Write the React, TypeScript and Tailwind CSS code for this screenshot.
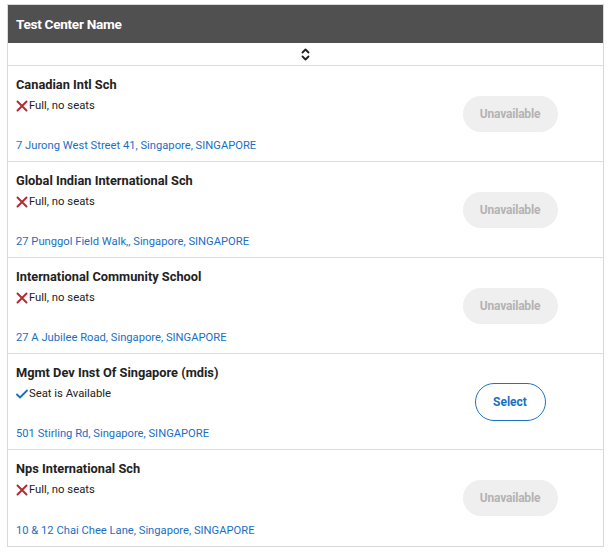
import React from 'react';

type Center = { name: string; available: boolean; address: string };

const centers: Center[] = [
  { name: 'Canadian Intl Sch', available: false, address: '7 Jurong West Street 41, Singapore, SINGAPORE' },
  { name: 'Global Indian International Sch', available: false, address: '27 Punggol Field Walk,, Singapore, SINGAPORE' },
  { name: 'International Community School', available: false, address: '27 A Jubilee Road, Singapore, SINGAPORE' },
  { name: 'Mgmt Dev Inst Of Singapore (mdis)', available: true, address: '501 Stirling Rd, Singapore, SINGAPORE' },
  { name: 'Nps International Sch', available: false, address: '10 & 12 Chai Chee Lane, Singapore, SINGAPORE' },
];

const SortIcon = () => (
  <svg width="9" height="13" viewBox="0 0 9 13" fill="none" stroke="#222" strokeWidth="1.8" strokeLinecap="round" strokeLinejoin="round">
    <path d="M1.5 4.5 4.5 1.5 7.5 4.5" />
    <path d="M1.5 8.5 4.5 11.5 7.5 8.5" />
  </svg>
);

const Cross = () => (
  <svg width="12" height="12" viewBox="0 0 12 12" stroke="#b8262f" strokeWidth="1.9" strokeLinecap="round">
    <path d="M1.5 1.5 10.5 10.5M10.5 1.5 1.5 10.5" />
  </svg>
);

const Check = () => (
  <svg width="12" height="10" viewBox="0 0 12 10" fill="none" stroke="#1b6fb8" strokeWidth="1.8" strokeLinecap="round" strokeLinejoin="round">
    <path d="M1 5.5 4 8.5 11 1.5" />
  </svg>
);

const App: React.FC = () => {
  return (
    <div className="min-h-[555px] bg-white px-[7px] pt-1 font-['Roboto',sans-serif]">
      <div className="w-[597px] border border-[#d9d9d9]">
        <div className="h-[38px] bg-[#505050] px-[8px] flex items-center">
          <span className="text-[13.6px] font-bold text-white tracking-[-0.3px]">Test Center Name</span>
        </div>
        <div className="h-[23px] flex items-center justify-center border-b border-[#dcdcdc]">
          <SortIcon />
        </div>
        {centers.map((center, i) => (
          <div key={center.name} className={`h-[96px] flex ${i < centers.length - 1 ? 'border-b border-[#dcdcdc]' : ''}`}>
            <div className="flex-1 flex flex-col justify-between pl-[8px] pt-[10px] pb-[7px]">
              <div>
                <div className="text-[12.8px] leading-[18px] font-bold text-[#222]">{center.name}</div>
                <div className="mt-[3px] flex items-center text-[11.3px] leading-[18px] text-[#222]">
                  {center.available ? <Check /> : <Cross />}
                  <span className="ml-[1px]">{center.available ? 'Seat is Available' : 'Full, no seats'}</span>
                </div>
              </div>
              <div className="text-[11.2px] leading-[16px] text-[#1a6fc4]">{center.address}</div>
            </div>
            <div className="w-[186px] flex items-center justify-center">
              {center.available ? (
                <button className="h-[38px] w-[71px] rounded-full border border-[#1a73c8] text-[12px] font-bold text-[#1a6fc4]">Select</button>
              ) : (
                <button className="h-[36px] w-[95px] rounded-full bg-[#efefef] text-[12px] font-bold text-[#b3b3b3] tracking-[-0.2px]">Unavailable</button>
              )}
            </div>
          </div>
        ))}
      </div>
    </div>
  );
};

export default App;
